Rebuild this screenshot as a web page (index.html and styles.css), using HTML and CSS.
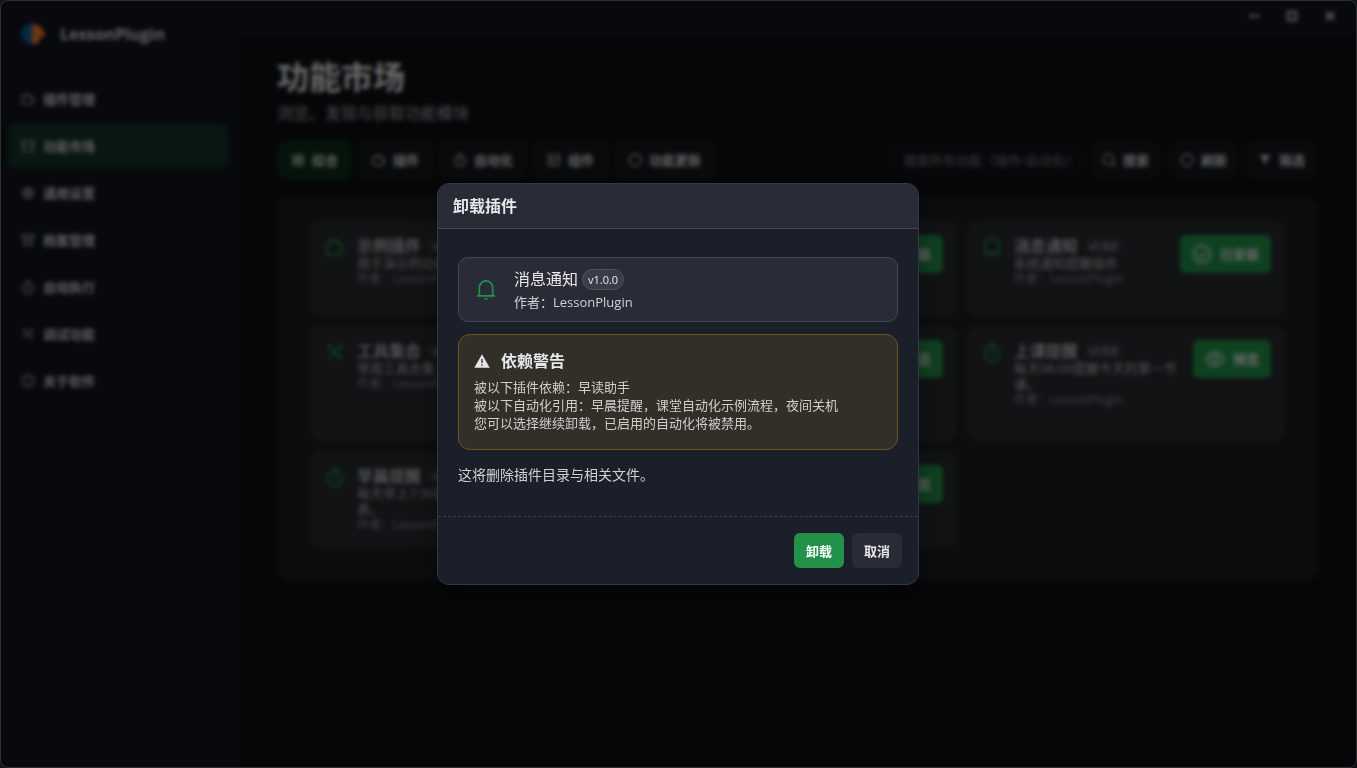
FILE: index.html
```html
<!DOCTYPE html>
<html lang="zh-CN">
<head>
  <meta charset="UTF-8">
  <meta name="viewport" content="width=device-width, initial-scale=1">
  <title>LessonPlugin</title>
  <link rel="stylesheet" href="styles.css">
</head>
<body>

  <!-- shared icons -->
  <svg class="sprite" aria-hidden="true">
    <symbol id="i-puzzle" viewBox="0 0 24 24"><path d="M4 7h3a3.500 3.500 0 0 1 7 0h4v4a3.500 3.500 0 0 1 0 7v3H4q-2 0-2-2V9q0-2 2-2z"/></symbol>
    <symbol id="i-store" viewBox="0 0 24 24"><path d="M3 3h18v18H3zM3 12h18"/></symbol>
    <symbol id="i-gear" viewBox="0 0 24 24"><path d="M9 3h6l1 3 4 1 1 5-1 5-4 1-1 3H9l-1-3-4-1-1-5 1-5 4-1z"/><circle cx="12" cy="12" r="4"/></symbol>
    <symbol id="i-archive" viewBox="0 0 24 24"><path d="M3 3h18v6H3zM5 9v12h14V9M9 13h6"/></symbol>
    <symbol id="i-timer" viewBox="0 0 24 24"><circle cx="12" cy="14" r="9"/><path d="M9 2h6M12 9v5l3 2"/></symbol>
    <symbol id="i-tools" viewBox="0 0 24 24"><path d="M4 4l16 16M20 4L4 20M3 7l4-4M17 3l4 4M16 20l4-4"/></symbol>
    <symbol id="i-info" viewBox="0 0 24 24"><circle cx="12" cy="12" r="10"/><path d="M12 11v6M12 7v1"/></symbol>
    <symbol id="i-grid" viewBox="0 0 24 24"><path d="M4 4h7v7H4zM14 4h7v7h-7zM4 14h7v7H4zM14 14h7v7h-7z"/></symbol>
    <symbol id="i-layout" viewBox="0 0 24 24"><path d="M3 3h18v18H3zM3 10h18M10 10v11"/></symbol>
    <symbol id="i-refresh" viewBox="0 0 24 24"><circle cx="12" cy="12" r="10"/></symbol>
    <symbol id="i-search" viewBox="0 0 24 24"><circle cx="11" cy="11" r="9"/><path d="M17 17l6 6"/></symbol>
    <symbol id="i-filter" viewBox="0 0 24 24"><path d="M2 4h20l-8 8v6h-4v-6z" fill="currentColor" stroke="none"/></symbol>
    <symbol id="i-bell" viewBox="0 0 24 24"><path d="M4 19V9a8 8 0 0 1 16 0v10M1 19h22M10 22.500h4"/></symbol>
    <symbol id="i-check" viewBox="0 0 24 24"><circle cx="12" cy="12" r="10"/><path d="M7 12l4 4 6-7"/></symbol>
    <symbol id="i-eye" viewBox="0 0 24 24"><path d="M1 12c5-11 17-11 22 0-5 11-17 11-22 0z"/><circle cx="12" cy="12" r="4"/></symbol>
    <symbol id="i-warning" viewBox="0 0 24 24"><path d="M12 2l11.500 20H.5z" fill="currentColor" stroke="none"/><path d="M12 9v6M12 17v2" stroke="#322f29"/></symbol>
  </svg>

  <div class="window">
    <aside class="sidebar">
      <div class="brand">
        <svg class="logo" viewBox="0 0 26 22">
          <path d="M12 1v20C6 21 3 18 2 14L0 11l2-3c1-4 4-7 10-7z" fill="#0d5c94"/>
          <path d="M12 1c6 0 10 3 11 7l3 3-3 3h-3v4l-3 3h-5z" fill="#f07a2c"/>
        </svg>
        <span>LessonPlugin</span>
      </div>
      <nav class="nav">
        <a href="#"><svg class="icon"><use href="#i-puzzle"/></svg>插件管理</a>
        <a href="#" class="active"><svg class="icon"><use href="#i-store"/></svg>功能市场</a>
        <a href="#"><svg class="icon"><use href="#i-gear"/></svg>通用设置</a>
        <a href="#"><svg class="icon"><use href="#i-archive"/></svg>档案管理</a>
        <a href="#"><svg class="icon"><use href="#i-timer"/></svg>自动执行</a>
        <a href="#"><svg class="icon"><use href="#i-tools"/></svg>调试功能</a>
        <a href="#"><svg class="icon"><use href="#i-info"/></svg>关于软件</a>
      </nav>
    </aside>

    <div class="content">
      <header class="titlebar">
        <button aria-label="最小化"><svg class="icon" viewBox="0 0 12 12"><path d="M1 6h10"/></svg></button>
        <button aria-label="最大化"><svg class="icon" viewBox="0 0 12 12"><path d="M2 2h8v8H2z"/></svg></button>
        <button aria-label="关闭"><svg class="icon" viewBox="0 0 12 12"><path d="M2 2l8 8M10 2l-8 8"/></svg></button>
      </header>

      <main class="page">
        <h1>功能市场</h1>
        <p class="subtitle">浏览、发现与获取功能模块</p>

        <div class="toolbar">
          <div class="tabs">
            <button class="active"><svg class="icon"><use href="#i-grid"/></svg>综合</button>
            <button><svg class="icon"><use href="#i-puzzle"/></svg>插件</button>
            <button><svg class="icon"><use href="#i-timer"/></svg>自动化</button>
            <button><svg class="icon"><use href="#i-layout"/></svg>组件</button>
            <button><svg class="icon"><use href="#i-refresh"/></svg>功能更新</button>
          </div>
          <div class="actions">
            <input type="text" aria-label="搜索" placeholder="搜索所有功能（插件/自动化/组件）">
            <button><svg class="icon"><use href="#i-search"/></svg>搜索</button>
            <button><svg class="icon"><use href="#i-refresh"/></svg>刷新</button>
            <button><svg class="icon"><use href="#i-filter"/></svg>筛选</button>
          </div>
        </div>

        <section class="panel">
          <article class="card">
            <svg class="icon card-icon"><use href="#i-puzzle"/></svg>
            <div class="card-text">
              <h2>示例插件 <span class="version">v1.0.0</span></h2>
              <p>用于演示的功能插件</p>
              <p class="author">作者：LessonPlugin</p>
            </div>
            <button class="install"><svg class="icon"><use href="#i-check"/></svg>已安装</button>
          </article>
          <article class="card">
            <svg class="icon card-icon"><use href="#i-timer"/></svg>
            <div class="card-text">
              <h2>早读助手 <span class="version">v1.0.0</span></h2>
              <p class="author">作者：LessonPlugin</p>
            </div>
            <button class="install"><svg class="icon"><use href="#i-check"/></svg>已安装</button>
          </article>
          <article class="card">
            <svg class="icon card-icon"><use href="#i-bell"/></svg>
            <div class="card-text">
              <h2>消息通知 <span class="version">v1.0.0</span></h2>
              <p>系统通知提醒插件</p>
              <p class="author">作者：LessonPlugin</p>
            </div>
            <button class="install"><svg class="icon"><use href="#i-check"/></svg>已安装</button>
          </article>
          <article class="card">
            <svg class="icon card-icon"><use href="#i-tools"/></svg>
            <div class="card-text">
              <h2>工具集合 <span class="version">v1.0.0</span></h2>
              <p>常用工具合集</p>
              <p class="author">作者：LessonPlugin</p>
            </div>
            <button class="install"><svg class="icon"><use href="#i-eye"/></svg>预览</button>
          </article>
          <article class="card">
            <svg class="icon card-icon"><use href="#i-timer"/></svg>
            <div class="card-text">
              <h2>课堂自动化</h2>
              <p class="author">作者：LessonPlugin</p>
            </div>
            <button class="install"><svg class="icon"><use href="#i-eye"/></svg>预览</button>
          </article>
          <article class="card">
            <svg class="icon card-icon"><use href="#i-timer"/></svg>
            <div class="card-text">
              <h2>上课提醒 <span class="version">v1.0.0</span></h2>
              <p>每天08:00提醒今天的第一节课。</p>
              <p class="author">作者：LessonPlugin</p>
            </div>
            <button class="install"><svg class="icon"><use href="#i-eye"/></svg>预览</button>
          </article>
          <article class="card">
            <svg class="icon card-icon"><use href="#i-timer"/></svg>
            <div class="card-text">
              <h2>早晨提醒 <span class="version">v1.0.0</span></h2>
              <p>每天早上7:30提醒今天的课表。</p>
              <p class="author">作者：LessonPlugin</p>
            </div>
            <button class="install"><svg class="icon"><use href="#i-eye"/></svg>预览</button>
          </article>
          <article class="card">
            <svg class="icon card-icon"><use href="#i-timer"/></svg>
            <div class="card-text">
              <h2>夜间关机</h2>
              <p class="author">作者：LessonPlugin</p>
            </div>
            <button class="install"><svg class="icon"><use href="#i-eye"/></svg>预览</button>
          </article>
        </section>
      </main>
    </div>
  </div>

  <div class="overlay">
    <div class="modal" role="dialog" aria-modal="true" aria-labelledby="modal-title">
      <h2 class="modal-header" id="modal-title">卸载插件</h2>
      <div class="modal-body">
        <div class="plugin-info">
          <svg class="icon plugin-icon"><use href="#i-bell"/></svg>
          <div>
            <div class="plugin-name">消息通知 <span class="badge">v1.0.0</span></div>
            <div class="plugin-author">作者：LessonPlugin</div>
          </div>
        </div>
        <div class="warning">
          <h3><svg class="icon"><use href="#i-warning"/></svg>依赖警告</h3>
          <p>被以下插件依赖：早读助手</p>
          <p>被以下自动化引用：早晨提醒，课堂自动化示例流程，夜间关机</p>
          <p>您可以选择继续卸载，已启用的自动化将被禁用。</p>
        </div>
        <p class="note">这将删除插件目录与相关文件。</p>
      </div>
      <div class="modal-footer">
        <button class="btn primary">卸载</button>
        <button class="btn">取消</button>
      </div>
    </div>
  </div>

</body>
</html>
```
FILE: styles.css
```css
* {
  box-sizing: border-box;
}

body {
  margin: 0;
  background: #0b0c0e;
  color: #e6e7ea;
  font-family: "Open Sans", "Noto Sans CJK SC", sans-serif;
  font-size: 13px;
  line-height: 18px;
  overflow: hidden;
}

h1, h2, h3, p {
  margin: 0;
}

button, input {
  font: inherit;
  color: inherit;
  border: 0;
  padding: 0;
}

button {
  cursor: pointer;
}

a {
  color: inherit;
  text-decoration: none;
}

.sprite {
  position: absolute;
  width: 0;
  height: 0;
}

.icon {
  width: 14px;
  height: 14px;
  flex: none;
  fill: none;
  stroke: currentColor;
  stroke-width: 2;
}

/* window */

.window {
  display: flex;
  min-height: 100vh;
  background: #0e0f12;
}

.sidebar {
  width: 239px;
  flex: none;
  padding: 20px 10px 0 7px;
  background: #12141e;
  border-right: 1px solid #171924;
}

.brand {
  display: flex;
  align-items: center;
  gap: 14px;
  height: 28px;
  padding-left: 13px;
  font-size: 16px;
  font-weight: 700;
  color: #d2d3d7;
}

.logo {
  width: 26px;
  height: 22px;
}

.nav {
  display: flex;
  flex-direction: column;
  gap: 3px;
  margin-top: 29px;
}

.nav a {
  display: flex;
  align-items: center;
  gap: 8px;
  height: 44px;
  padding: 0 14px;
  border-radius: 8px;
  font-weight: 700;
  color: #cccdd1;
}

.nav a.active {
  background: #143228;
}

.content {
  flex: 1;
  min-width: 0;
}

.titlebar {
  display: flex;
  justify-content: flex-end;
  height: 35px;
  padding-right: 8px;
  background: #12141e;
  border-bottom: 1px solid #171924;
}

.titlebar button {
  width: 38px;
  background: none;
}

.titlebar .icon {
  width: 12px;
  height: 12px;
}

/* market page */

.page {
  padding: 22px 39px 40px 38px;
}

.page h1 {
  font-size: 32px;
  line-height: 40px;
}

.subtitle {
  margin-top: 6px;
  font-size: 16px;
  line-height: 20px;
  color: #a6a8ae;
}

.toolbar {
  display: flex;
  align-items: center;
  justify-content: space-between;
  margin-top: 18px;
  padding-right: 2px;
}

.tabs, .actions {
  display: flex;
  gap: 6px;
}

.actions {
  gap: 9px;
}

.tabs button, .actions button {
  display: flex;
  align-items: center;
  gap: 7px;
  height: 38px;
  padding: 0 13px;
  border: 1px solid #1b1d21;
  border-radius: 8px;
  background: #15171a;
  font-weight: 700;
  color: #d8d9dd;
}

.tabs button.active {
  background: #0d2c18;
  border-color: #0d3019;
}

.actions button {
  height: 34px;
  padding: 0 10px;
  border-radius: 6px;
}

.actions input {
  width: 189px;
  height: 34px;
  padding: 0 10px;
  border: 1px solid #1d1f23;
  border-radius: 8px;
  background: #101115;
}

.actions input::placeholder {
  color: #7c7e84;
}

.panel {
  display: grid;
  grid-template-columns: repeat(3, 1fr);
  grid-template-rows: minmax(95px, auto) minmax(115px, auto) minmax(95px, auto);
  gap: 10px;
  margin-top: 18px;
  padding: 23px 32px 32px;
  border: 1px solid #222428;
  border-radius: 12px;
  background: #1b1d21;
}

.card {
  display: flex;
  align-items: flex-start;
  gap: 12px;
  padding: 13px;
  border: 1px solid #2d2f34;
  border-radius: 10px;
  background: #282a2e;
}

.card-icon {
  width: 20px;
  height: 20px;
  margin-left: 1px;
  margin-top: 2px;
  color: #22a04c;
}

.card-text {
  flex: 1;
  min-width: 0;
  padding-top: 2px;
  line-height: 16px;
  color: #b2b3b9;
}

.card h2 {
  display: flex;
  align-items: center;
  gap: 6px;
  font-size: 16px;
  line-height: 18px;
  font-weight: 500;
  color: #cccdd1;
  white-space: nowrap;
}

.card .author {
  font-size: 12px;
  color: #858b95;
}

.version {
  padding: 0 6px;
  border-radius: 8px;
  background: #34363c;
  font-size: 10px;
  line-height: 16px;
}

.install {
  display: flex;
  align-items: center;
  gap: 8px;
  height: 38px;
  padding: 0 12px;
  border-radius: 6px;
  background: #239149;
  font-weight: 700;
}

.install .icon {
  width: 20px;
  height: 20px;
}

/* uninstall dialog */

.overlay {
  position: fixed;
  inset: 0;
  display: flex;
  align-items: center;
  justify-content: center;
  padding-right: 1px;
  border: 1px solid #2e2f31;
  border-radius: 8px;
  background: rgba(0, 0, 0, 0.55);
  backdrop-filter: blur(2px);
}

.modal {
  width: 482px;
  max-width: 92%;
  overflow: hidden;
  border: 1px solid #343844;
  border-radius: 12px;
  background: #1b1f29;
  box-shadow: 0 10px 30px rgba(0, 0, 0, 0.4);
}

.modal-header {
  padding: 11px 15px;
  border-bottom: 1px solid #424651;
  background: #292c37;
  font-size: 16px;
  line-height: 22px;
}

.modal-body {
  padding: 28px 20px 32px;
}

.plugin-info {
  display: flex;
  align-items: center;
  gap: 18px;
  padding: 9px 17px;
  border: 1px solid #424651;
  border-radius: 10px;
  background: #292c37;
}

.plugin-icon {
  width: 20px;
  height: 20px;
  color: #239149;
}

.plugin-name {
  display: flex;
  align-items: center;
  gap: 4px;
  font-size: 16px;
  line-height: 25px;
}

.badge {
  padding: 0 5px;
  border: 1px solid #50545f;
  border-radius: 11px;
  background: #3a3d48;
  font-size: 11px;
  line-height: 19px;
}

.plugin-author {
  line-height: 20px;
  color: #d2d3d5;
}

.warning {
  margin-top: 12px;
  padding: 15px 15px 17px;
  border: 1px solid #6c5419;
  border-radius: 12px;
  background: #322f29;
  color: #cfcfcd;
}

.warning h3 {
  display: flex;
  align-items: center;
  gap: 11px;
  margin-bottom: 6px;
  font-size: 16px;
  line-height: 22px;
  color: #e6e7ea;
}

.warning .icon {
  width: 16px;
  height: 16px;
}

.note {
  margin-top: 16px;
  font-size: 14px;
  color: #cfd0d3;
}

.modal-footer {
  display: flex;
  justify-content: flex-end;
  gap: 8px;
  padding: 16px;
  border-top: 1px dashed #3b3f4a;
}

.btn {
  height: 35px;
  padding: 0 12px;
  border-radius: 6px;
  background: #292c37;
  font-weight: 700;
}

.btn.primary {
  background: #239149;
  color: #fff;
}
```
